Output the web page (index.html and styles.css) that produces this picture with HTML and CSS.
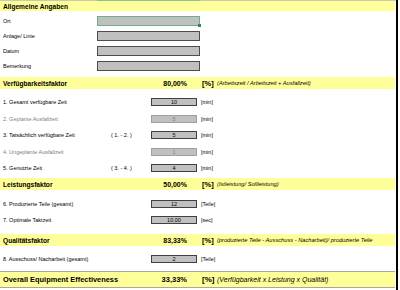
FILE: index.html
```html
<!DOCTYPE html>
<html lang="de">
<head>
<meta charset="utf-8">
<title>OEE</title>
<link rel="stylesheet" href="styles.css">
</head>
<body>
<div class="sheet">
  <div class="topline"><span class="top-gap"></span><span class="top-sel"></span></div>

  <div class="band band-first"><span class="band-title">Allgemeine Angaben</span></div>

  <div class="info">
    <div class="info-row"><span class="info-label">Ort</span><span class="field field-sel"><span class="handle"></span></span></div>
    <div class="info-row"><span class="info-label">Anlage/ Linie</span><span class="field"></span></div>
    <div class="info-row"><span class="info-label">Datum</span><span class="field"></span></div>
    <div class="info-row"><span class="info-label">Bemerkung</span><span class="field"></span></div>
  </div>

  <div class="band band-a">
    <span class="band-title">Verfügbarkeitsfaktor</span>
    <span class="pct">80,00%</span>
    <span class="unit-pct">[%]</span>
    <span class="formula">(Arbeitszeit / Arbeitszeit + Ausfallzeit)</span>
  </div>

  <div class="rows rows-a">
    <div class="row"><span class="label">1. Gesamt verfügbare Zeit</span><span class="hint"></span><span class="box">10</span><span class="unit">[min]</span></div>
    <div class="row muted"><span class="label">2. Geplante Ausfallzeit</span><span class="hint"></span><span class="box">5</span><span class="unit">[min]</span></div>
    <div class="row"><span class="label">3. Tatsächlich verfügbare Zeit</span><span class="hint">( 1. - 2. )</span><span class="box">5</span><span class="unit">[min]</span></div>
    <div class="row muted"><span class="label">4. Ungeplante Ausfallzeit</span><span class="hint"></span><span class="box">1</span><span class="unit">[min]</span></div>
    <div class="row"><span class="label">5. Genutzte Zeit</span><span class="hint">( 3. - 4. )</span><span class="box">4</span><span class="unit">[min]</span></div>
  </div>

  <div class="band band-b">
    <span class="band-title">Leistungsfaktor</span>
    <span class="pct">50,00%</span>
    <span class="unit-pct">[%]</span>
    <span class="formula">(Istleistung/ Sollleistung)</span>
  </div>

  <div class="rows rows-b">
    <div class="row"><span class="label">6. Produzierte Teile (gesamt)</span><span class="hint"></span><span class="box">12</span><span class="unit">[Teile]</span></div>
    <div class="row"><span class="label">7. Optimale Taktzeit</span><span class="hint"></span><span class="box">10,00</span><span class="unit">[sec]</span></div>
  </div>

  <div class="band band-c">
    <span class="band-title">Qualitätsfaktor</span>
    <span class="pct">83,33%</span>
    <span class="unit-pct">[%]</span>
    <span class="formula">(produzierte Teile - Ausschuss - Nacharbeit)/ produzierte Teile</span>
  </div>

  <div class="rows rows-c">
    <div class="row"><span class="label">8. Ausschuss/ Nacharbeit (gesamt)</span><span class="hint"></span><span class="box">2</span><span class="unit">[Teile]</span></div>
  </div>

  <div class="band band-total">
    <span class="band-title">Overall Equipment Effectiveness</span>
    <span class="pct">33,33%</span>
    <span class="unit-pct">[%]</span>
    <span class="formula">(Verfügbarkeit x Leistung x Qualität)</span>
  </div>
</div>
</body>
</html>
```
FILE: styles.css
```css
html, body {
  margin: 0;
  padding: 0;
  background: #ffffff;
}

body {
  font-family: "Liberation Sans", Arial, sans-serif;
  color: #000000;
  width: 400px;
  height: 290px;
  overflow: hidden;
}

.sheet {
  width: 396px;
  height: 290px;
  border-right: 2px solid #000000;
  box-sizing: content-box;
}

.topline {
  display: flex;
  height: 1px;
  background: #c9c9b8;
}
.top-gap { width: 97px; }
.top-sel { width: 103px; background: #8fc09c; }

.band {
  display: flex;
  align-items: center;
  background: #ffff99;
  height: 12px;
  margin-right: 1px;
}
.band-first { height: 10px; }

.band-title {
  font-weight: bold;
  font-size: 6.6px;
  padding-left: 3px;
  width: 157px;
  white-space: nowrap;
}

.pct {
  font-weight: bold;
  font-size: 7px;
  width: 27px;
  text-align: right;
  white-space: nowrap;
}

.unit-pct {
  font-weight: bold;
  font-size: 7.5px;
  margin-left: 15px;
  width: 15px;
}

.formula {
  font-style: italic;
  font-size: 5.7px;
  white-space: nowrap;
}

.info {
  display: flex;
  flex-direction: column;
  gap: 5px;
  padding-top: 5px;
  padding-bottom: 6px;
}
.info-row {
  display: flex;
  align-items: center;
  height: 10px;
}
.info-label {
  width: 94px;
  padding-left: 3px;
  font-size: 5.5px;
}
.field {
  width: 101px;
  height: 8px;
  background: #c0c0c0;
  border: 1px solid #4d4d4d;
}
.field-sel {
  position: relative;
  border-color: #6fae87;
}
.handle {
  position: absolute;
  right: -2px;
  bottom: -2px;
  width: 3px;
  height: 3px;
  background: #2d8a4c;
}

.rows {
  display: flex;
  flex-direction: column;
}
.rows-a { padding-top: 5px; padding-bottom: 1.5px; }
.rows-b { padding-top: 5.5px; padding-bottom: 6.5px; }
.rows-c { padding-top: 5px; padding-bottom: 3.5px; }

.row {
  display: flex;
  align-items: center;
  height: 16.5px;
  font-size: 5.5px;
}
.rows-b .row { height: 16px; }

.label {
  width: 108px;
  padding-left: 3px;
  white-space: nowrap;
}
.hint {
  width: 40px;
}
.box {
  width: 44px;
  height: 6px;
  line-height: 6px;
  background: #c0c0c0;
  border: 1px solid #404040;
  text-align: center;
}
.unit {
  margin-left: 4px;
}
.muted .label,
.muted .box {
  color: #808080;
}
.muted .box {
  border-color: #a0a0a0;
}

.band-total {
  height: 15px;
  border-top: 1px solid #a6a6a6;
  border-bottom: 1px solid #a6a6a6;
}
.band-total .band-title {
  font-size: 7.4px;
}
.band-total .pct {
  font-size: 7.5px;
}
.band-total .unit-pct {
  font-size: 8px;
}
.band-total .formula {
  font-size: 7px;
}
```
